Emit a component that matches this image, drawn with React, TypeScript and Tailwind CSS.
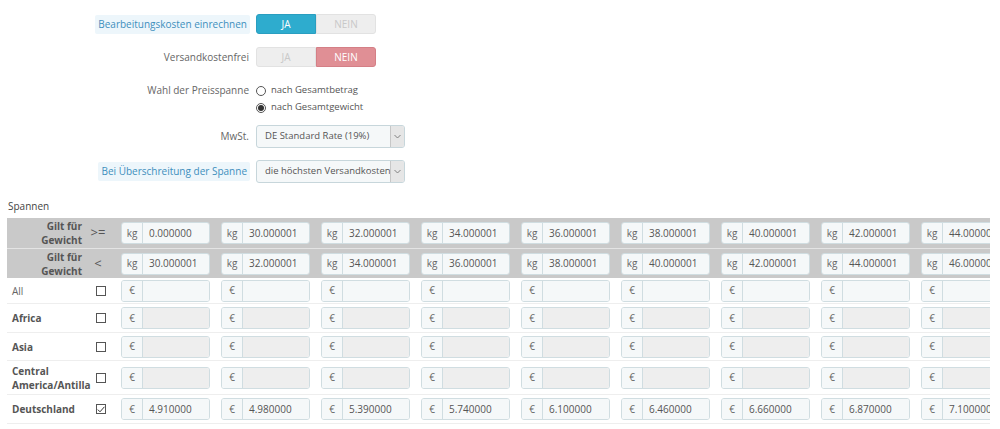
import React from 'react';

const lower = ['0.000000', '30.000001', '32.000001', '34.000001', '36.000001', '38.000001', '40.000001', '42.000001', '44.000001'];
const upper = ['30.000001', '32.000001', '34.000001', '36.000001', '38.000001', '40.000001', '42.000001', '44.000001', '46.000001'];
const deValues = ['4.910000', '4.980000', '5.390000', '5.740000', '6.100000', '6.460000', '6.660000', '6.870000', '7.100000'];

const zones = [
  { name: 'All', bold: false, checked: false, disabled: false, values: [] as string[], h: 'h-[26px]' },
  { name: 'Africa', bold: true, checked: false, disabled: true, values: [] as string[], h: 'h-[29px]' },
  { name: 'Asia', bold: true, checked: false, disabled: true, values: [] as string[], h: 'h-[28px]' },
  { name: 'Central America/Antilla', bold: true, checked: false, disabled: true, values: [] as string[], h: 'h-[34px]' },
  { name: 'Deutschland', bold: true, checked: true, disabled: false, values: deValues, h: 'h-[29px]' },
];

function Toggle({ yes }: { yes: boolean }) {
  return (
    <div className="flex h-[20px] w-[120px] text-[10px] leading-none">
      <div
        className={
          yes
            ? 'flex w-[60px] items-center justify-center rounded-l-[3px] border border-[#2a9ec0] bg-[#2eacce] text-white'
            : 'flex w-[60px] items-center justify-center rounded-l-[3px] border border-[#e2e2e2] bg-[#eeeeee] text-[#c8c8c8]'
        }
      >
        JA
      </div>
      <div
        className={
          yes
            ? 'flex w-[60px] items-center justify-center rounded-r-[3px] border border-[#e2e2e2] bg-[#eeeeee] text-[#c8c8c8]'
            : 'flex w-[60px] items-center justify-center rounded-r-[3px] border border-[#d47f86] bg-[#e08f95] text-white'
        }
      >
        NEIN
      </div>
    </div>
  );
}

function Select({ value }: { value: string }) {
  return (
    <div className="flex h-[23px] w-[149px] rounded-[3px] border border-[#c7d6db] bg-[#f5f8f9] text-[9.5px] text-[#555]">
      <div className="flex flex-1 items-center overflow-hidden whitespace-nowrap pl-[8px]">{value}</div>
      <div className="flex w-[14px] items-center justify-center rounded-r-[2px] border-l border-[#c7c7c7] bg-[#e6e6e6]">
        <svg width="7" height="5" viewBox="0 0 7 5" fill="none">
          <path d="M0.5 1 L3.5 4 L6.5 1" stroke="#777" strokeWidth="0.9" />
        </svg>
      </div>
    </div>
  );
}

function Radio({ checked, label }: { checked: boolean; label: string }) {
  return (
    <div className="flex h-[17px] items-center gap-[5px] text-[9.5px] text-[#555]">
      <span className="flex h-[10px] w-[10px] items-center justify-center rounded-full border border-[#555] bg-white">
        {checked && <span className="h-[6px] w-[6px] rounded-full bg-[#333]" />}
      </span>
      {label}
    </div>
  );
}

function InputGroup({ addon, value, disabled }: { addon: string; value?: string; disabled?: boolean }) {
  return (
    <div className="flex h-[22px] w-[89px] overflow-hidden rounded-[3px] border border-[#d0dde1] text-[10px] text-[#555]">
      <div className="flex w-[21px] items-center justify-center border-r border-[#d0dde1] bg-[#f5f8f9] text-[#666]">
        {addon}
      </div>
      <div className={disabled ? 'flex flex-1 items-center bg-[#eeeeee] pl-[6px]' : 'flex flex-1 items-center bg-[#f5f8f9] pl-[6px]'}>
        {value}
      </div>
    </div>
  );
}

export default function App() {
  return (
    <div className="h-[429px] w-[1000px] overflow-hidden bg-white" style={{ fontFamily: '"Open Sans", "Liberation Sans", sans-serif' }}>
      <div className="flex flex-col pt-[14px] text-[10px] text-[#666]">
        <div className="flex h-[20px] items-center">
          <div className="flex w-[250px] justify-end">
            <span className="rounded-[2px] bg-[#edf6fb] px-[3px] py-[2px] text-[#3e8fbd]">Bearbeitungskosten einrechnen</span>
          </div>
          <div className="ml-[6px]">
            <Toggle yes={true} />
          </div>
        </div>
        <div className="mt-[13px] flex h-[20px] items-center">
          <div className="w-[250px] pr-[1px] text-right">Versandkostenfrei</div>
          <div className="ml-[6px]">
            <Toggle yes={false} />
          </div>
        </div>
        <div className="mt-[15px] flex">
          <div className="flex h-[17px] w-[250px] items-center justify-end pr-[1px]">Wahl der Preisspanne</div>
          <div className="ml-[6px] flex flex-col">
            <Radio checked={false} label="nach Gesamtbetrag" />
            <Radio checked={true} label="nach Gesamtgewicht" />
          </div>
        </div>
        <div className="mt-[9px] flex h-[23px] items-center">
          <div className="w-[250px] pr-[1px] text-right">MwSt.</div>
          <div className="ml-[6px]">
            <Select value="DE Standard Rate (19%)" />
          </div>
        </div>
        <div className="mt-[12px] flex h-[23px] items-center">
          <div className="flex w-[250px] justify-end">
            <span className="rounded-[2px] bg-[#edf6fb] px-[3px] py-[2px] text-[#3e8fbd]">Bei Überschreitung der Spanne</span>
          </div>
          <div className="ml-[6px]">
            <Select value="die höchsten Versandkosten" />
          </div>
        </div>
        <div className="mt-[16px] pl-[8px] text-[10px] text-[#444]">Spannen</div>
      </div>

      <div className="ml-[7px] mt-[4px] w-[983px] overflow-hidden">
        {[
          { sign: '>=', values: lower },
          { sign: '<', values: upper },
        ].map((row, i) => (
          <div key={i} className={i === 0 ? 'flex h-[30px] w-max items-center bg-[#c9c9c9]' : 'flex h-[30px] w-max items-center border-t border-[#e4e4e4] bg-[#c9c9c9]'}>
            <div className="w-[75px] text-right text-[10px] font-bold leading-[14px] text-[#555]">
              Gilt für
              <br />
              Gewicht
            </div>
            <div className="w-[32px] text-center text-[13px] text-[#555]">{row.sign}</div>
            {row.values.map((v) => (
              <div key={v} className="w-[100px] pl-[7px]">
                <InputGroup addon="kg" value={v} />
              </div>
            ))}
          </div>
        ))}
        {zones.map((z) => (
          <div key={z.name} className={`flex w-max items-center border-b border-[#eeeeee] ${z.h}`}>
            <div className={z.bold ? 'w-[81px] pl-[5px] text-[10px] font-bold leading-[14px] text-[#555]' : 'w-[81px] pl-[5px] text-[10px] leading-[14px] text-[#666]'}>
              {z.name === 'Central America/Antilla' ? (
                <>
                  Central
                  <br />
                  America/Antilla
                </>
              ) : (
                z.name
              )}
            </div>
            <div className="flex w-[26px] justify-center">
              <span className="flex h-[10px] w-[10px] items-center justify-center border border-[#555] bg-white">
                {z.checked && (
                  <svg width="8" height="7" viewBox="0 0 8 7" fill="none">
                    <path d="M0.8 3.6 L3 5.8 L7.4 0.8" stroke="#333" strokeWidth="1" />
                  </svg>
                )}
              </span>
            </div>
            {lower.map((_, idx) => (
              <div key={idx} className="w-[100px] pl-[7px]">
                <InputGroup addon="€" value={z.values[idx]} disabled={z.disabled && !z.values[idx]} />
              </div>
            ))}
          </div>
        ))}
      </div>
    </div>
  );
}
